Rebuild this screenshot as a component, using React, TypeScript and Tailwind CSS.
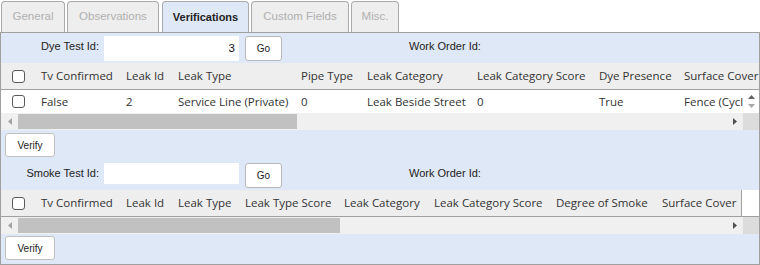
import React from "react";

type Col = { label: string; w: number };

const dyeCols: Col[] = [
  { label: "Tv Confirmed", w: 85 },
  { label: "Leak Id", w: 52 },
  { label: "Leak Type", w: 123 },
  { label: "Pipe Type", w: 66 },
  { label: "Leak Category", w: 110 },
  { label: "Leak Category Score", w: 122 },
  { label: "Dye Presence", w: 85 },
  { label: "Surface Cover", w: 120 },
];

const dyeRow = ["False", "2", "Service Line (Private)", "0", "Leak Beside Street", "0", "True", "Fence (Cyclone)"];

const smokeCols: Col[] = [
  { label: "Tv Confirmed", w: 85 },
  { label: "Leak Id", w: 52 },
  { label: "Leak Type", w: 67 },
  { label: "Leak Type Score", w: 99 },
  { label: "Leak Category", w: 90 },
  { label: "Leak Category Score", w: 122 },
  { label: "Degree of Smoke", w: 106 },
  { label: "Surface Cover", w: 88 },
];

const tabs = [
  { label: "General", w: 64, ml: 1 },
  { label: "Observations", w: 92, ml: 2 },
  { label: "Verifications", w: 87, ml: 3, active: true },
  { label: "Custom Fields", w: 98, ml: 2 },
  { label: "Misc.", w: 48, ml: 2 },
];

const Checkbox = () => (
  <div className="w-[13px] h-[13px] rounded-[3px] border border-[#5a5a5a] bg-white shrink-0" />
);

const TriLeft = ({ color }: { color: string }) => (
  <svg width="4" height="7" viewBox="0 0 4 7"><path d="M4 0 L0 3.5 L4 7 Z" fill={color} /></svg>
);
const TriRight = ({ color }: { color: string }) => (
  <svg width="4" height="7" viewBox="0 0 4 7"><path d="M0 0 L4 3.5 L0 7 Z" fill={color} /></svg>
);
const TriUp = ({ color }: { color: string }) => (
  <svg width="7" height="4" viewBox="0 0 7 4"><path d="M0 4 L3.5 0 L7 4 Z" fill={color} /></svg>
);
const TriDown = ({ color }: { color: string }) => (
  <svg width="7" height="4" viewBox="0 0 7 4"><path d="M0 0 L3.5 4 L7 0 Z" fill={color} /></svg>
);

const HScroll = ({ thumb }: { thumb: number }) => (
  <div className="flex h-[17px]">
    <div className="flex-1 bg-[#f0f0f0] flex items-center">
      <div className="w-[17px] flex justify-center shrink-0"><TriLeft color="#a3a3a3" /></div>
      <div className="h-[15px] bg-[#c1c1c1]" style={{ width: thumb }} />
      <div className="flex-1" />
      <div className="w-[17px] flex justify-center shrink-0"><TriRight color="#505050" /></div>
    </div>
    <div className="w-[16px] bg-[#dcdcdc]" />
  </div>
);

const FilterRow = ({ label, value, tall }: { label: string; value: string; tall: boolean }) => (
  <div className="flex items-start h-[30px] font-['Liberation_Sans',Arial,sans-serif] text-[11px] text-[#222]">
    <div className="w-[98px] text-right pt-[5px]">{label}</div>
    <div className={`ml-[5px] mt-[3px] w-[135px] bg-white text-right pr-[4px] text-[11.5px] text-[#111] ${tall ? "h-[25px] leading-[25px]" : "h-[21px] leading-[21px]"}`}>
      {value}
    </div>
    <button className="ml-[6px] mt-[3px] w-[37px] h-[25px] bg-white border border-[#b8b8b8] rounded-[3px] text-[10px] text-[#222]">
      Go
    </button>
    <div className="ml-[127px] pt-[5px]">Work Order Id:</div>
  </div>
);

const HeaderRow = ({ cols, fill }: { cols: Col[]; fill: boolean }) => (
  <div className="flex h-[27px] border-b border-[#a0a0a0]">
    <div className={`flex items-center bg-[#eeeeee] overflow-hidden ${fill ? "flex-1" : "w-[741px] border-r border-[#a0a0a0]"}`}>
      <div className="w-[32px] pl-[11px] shrink-0"><Checkbox /></div>
      {cols.map((c) => (
        <div key={c.label} className="pl-[8px] shrink-0 whitespace-nowrap" style={{ width: c.w }}>
          {c.label}
        </div>
      ))}
    </div>
    {!fill && <div className="flex-1 bg-white" />}
  </div>
);

const VerifyButton = () => (
  <button className="ml-[4px] w-[50px] h-[24px] bg-white border border-[#c0c0c0] rounded-[3px] font-['Liberation_Sans',Arial,sans-serif] text-[10px] text-[#222]">
    Verify
  </button>
);

export default function App() {
  return (
    <div className="w-[760px] h-[265px] bg-white overflow-hidden">
      <div className="flex h-[32px] items-end">
        {tabs.map((t) => (
          <div
            key={t.label}
            className={`h-[31px] rounded-t-[4px] border border-b-0 border-[#a9a9a9] flex items-center justify-center font-['Liberation_Sans',Arial,sans-serif] ${
              t.active ? "bg-[#dfe8f6] text-[#222] font-bold text-[11px]" : "bg-[#eeeeee] text-[#b0b0b0] text-[11.5px]"
            }`}
            style={{ width: t.w, marginLeft: t.ml }}
          >
            {t.label}
          </div>
        ))}
      </div>
      <div className="h-[233px] border border-[#a0a0a0] bg-[#dfe8f6] font-['Open_Sans','Noto_Sans',sans-serif] text-[11.5px] text-[#333]">
        <FilterRow label="Dye Test Id:" value="3" tall />
        <HeaderRow cols={dyeCols} fill />
        <div className="flex h-[23px] bg-white">
          <div className="flex-1 flex items-center overflow-hidden">
            <div className="w-[32px] pl-[11px] shrink-0"><Checkbox /></div>
            {dyeCols.map((c, i) => (
              <div key={c.label} className="pl-[8px] shrink-0 whitespace-nowrap" style={{ width: c.w }}>
                {dyeRow[i]}
              </div>
            ))}
          </div>
          <div className="w-[16px] flex flex-col items-center pt-[5px] gap-[5px]">
            <TriUp color="#606060" />
            <TriDown color="#a8a8a8" />
          </div>
        </div>
        <HScroll thumb={279} />
        <div className="h-[30px] pt-[3px]"><VerifyButton /></div>
        <FilterRow label="Smoke Test Id:" value="" tall={false} />
        <HeaderRow cols={smokeCols} fill={false} />
        <HScroll thumb={322} />
        <div className="pt-[2px]"><VerifyButton /></div>
      </div>
    </div>
  );
}
